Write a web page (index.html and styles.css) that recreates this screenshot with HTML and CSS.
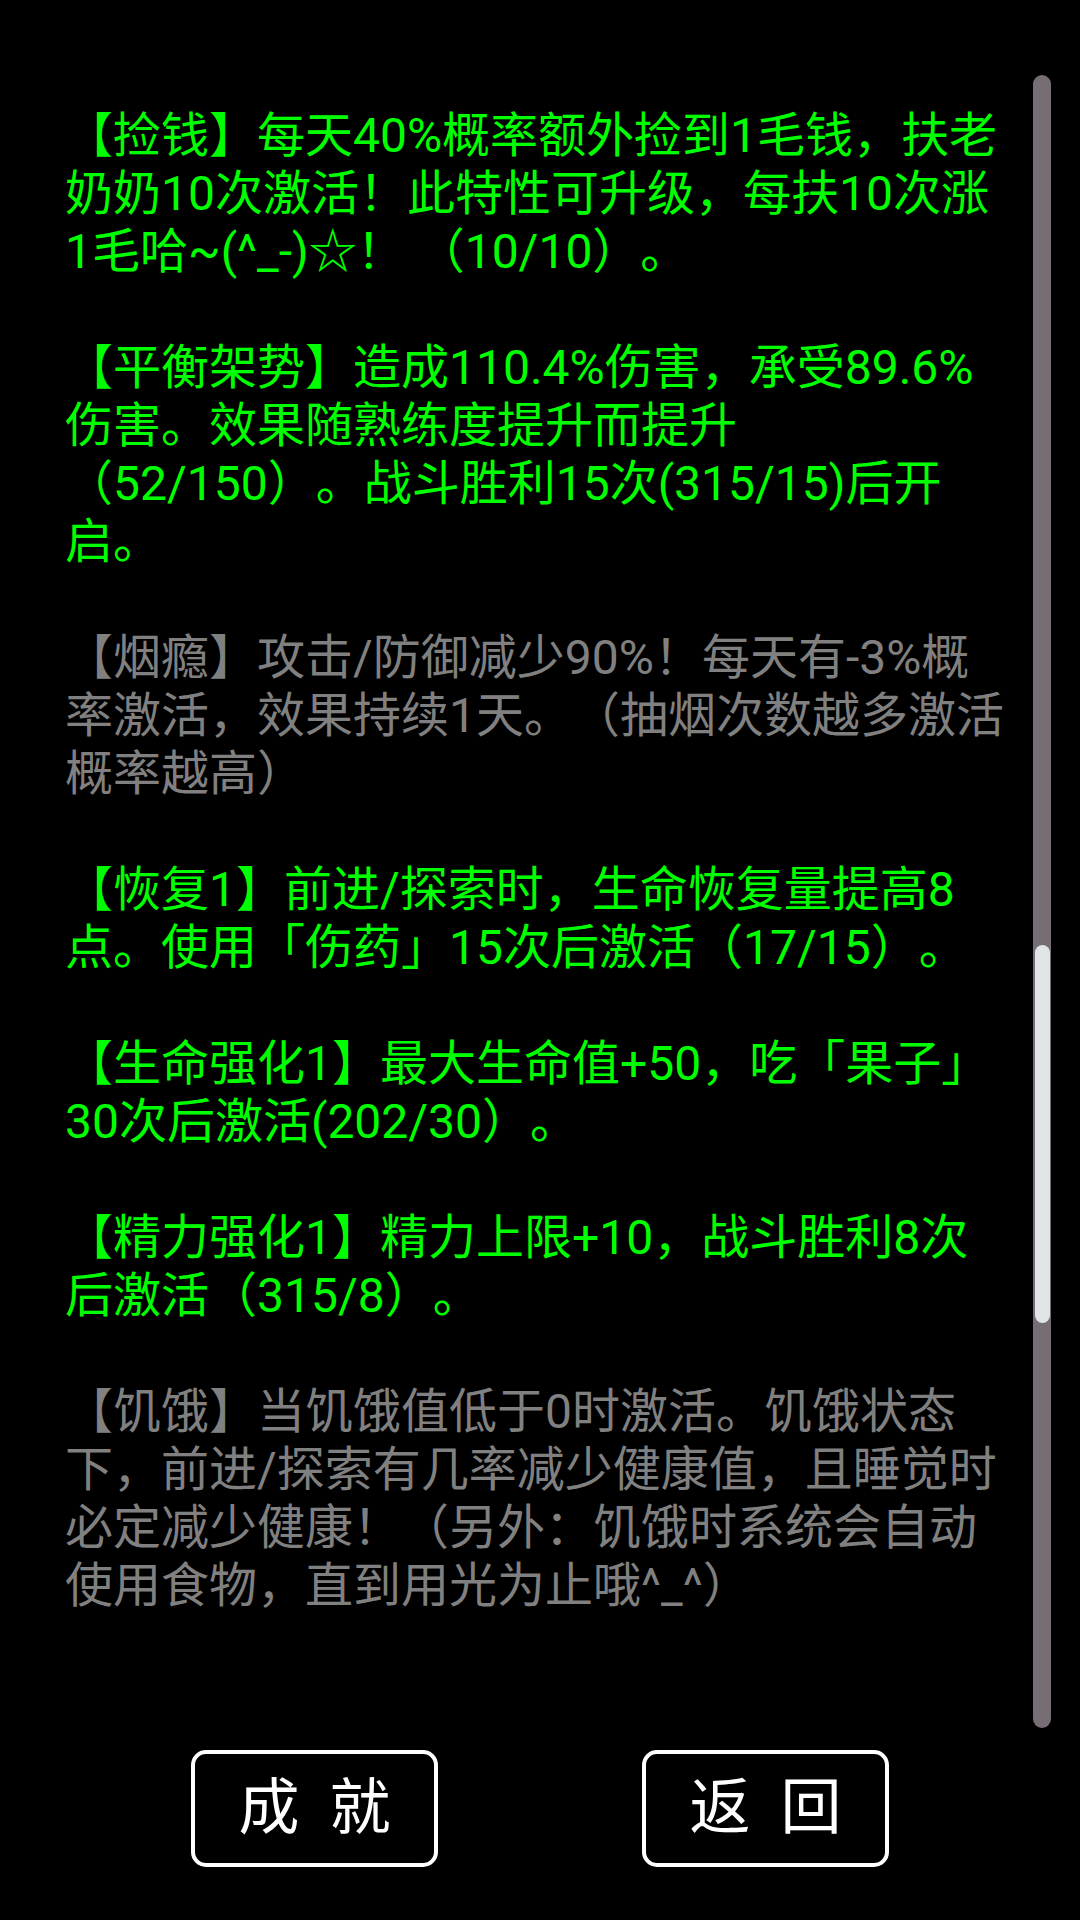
FILE: index.html
```html
<!DOCTYPE html>
<html lang="zh-CN">
<head>
<meta charset="utf-8">
<link rel="stylesheet" href="styles.css">
</head>
<body>
<div class="screen">
  <div class="scroll">
    <p class="on">【捡钱】每天40%概率额外捡到1毛钱，扶老奶奶10次激活！此特性可升级，每扶10次涨1毛哈~(^_-)☆！ （10/10）。</p>
    <p class="on">【平衡架势】造成110.4%伤害，承受89.6%伤害。效果随熟练度提升而提升（52/150）。战斗胜利15次(315/15)后开启。</p>
    <p class="off">【烟瘾】攻击/防御减少90%！每天有-3%概率激活，效果持续1天。（抽烟次数越多激活概率越高）</p>
    <p class="on">【恢复1】前进/探索时，生命恢复量提高8点。使用「伤药」15次后激活（17/15）。</p>
    <p class="on">【生命强化1】最大生命值+50，吃「果子」30次后激活(202/30）。</p>
    <p class="on">【精力强化1】精力上限+10，战斗胜利8次后激活（315/8）。</p>
    <p class="off">【饥饿】当饥饿值低于0时激活。饥饿状态下，前进/探索有几率减少健康值，且睡觉时必定减少健康！（另外：饥饿时系统会自动使用食物，直到用光为止哦^_^）</p>
  </div>
  <div class="scrollbar"><div class="thumb"></div></div>
  <div class="buttons">
    <div class="btn"><span>成</span><span>就</span></div>
    <div class="btn"><span>返</span><span>回</span></div>
  </div>
</div>
</body>
</html>
```

FILE: styles.css
```css
html, body {
  margin: 0;
  padding: 0;
  background: #000;
}
.screen {
  position: relative;
  width: 1080px;
  height: 1920px;
  background: #000;
  overflow: hidden;
  font-family: Roboto, "Noto Sans CJK SC", sans-serif;
  text-spacing-trim: space-all;
}
.scroll {
  height: 1750px;
  box-sizing: border-box;
  padding: 107px 70px 0 65px;
  overflow: hidden;
}
.scroll p {
  margin: 0 0 58px 0;
  font-size: 48px;
  line-height: 58px;
  text-spacing-trim: space-all;
}
.on { color: #00ff00; }
.off { color: #808080; }
.scrollbar {
  position: absolute;
  left: 1033px;
  top: 75px;
  width: 18px;
  height: 1653px;
  border-radius: 9px;
  background: #766e74;
}
.thumb {
  position: absolute;
  left: 1.5px;
  top: 870px;
  width: 15px;
  height: 378px;
  border-radius: 8px;
  background: #e1e5e7;
}
.buttons {
  display: flex;
  justify-content: center;
  gap: 204px;
}
.btn {
  width: 247px;
  height: 117px;
  box-sizing: border-box;
  border: 4px solid #fff;
  border-radius: 15px;
  display: flex;
  align-items: center;
  justify-content: center;
  gap: 30px;
  color: #fff;
  font-size: 61px;
  line-height: 1;
}
```
